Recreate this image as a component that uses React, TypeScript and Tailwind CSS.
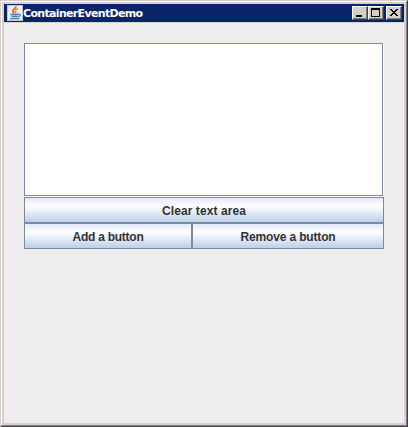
import type { ReactNode } from 'react';

function JavaIcon() {
  return (
    <svg width="16" height="16" viewBox="0 0 16 16" className="shrink-0">
      <rect width="16" height="16" fill="#b5c8de" />
      <rect x="1" y="1" width="14" height="14" fill="#edf1f5" />
      <g fill="none" strokeWidth="1.3">
        <path d="M8.8 1.2C9.5 3.6 5.2 4.2 5.7 6.2c.2.9 1 1.3 1.5 2.1" stroke="#e8701a" strokeWidth="1.9" />
        <path d="M10.8 3.8C8.5 4.6 7.9 5.5 8.8 6.6c.4.7 0 1.2-.6 1.7" stroke="#f08a35" strokeWidth="1.5" />
        <path d="M3.5 9.5h7.5M4.5 11.5h6M3 13.6h9.5" stroke="#4a7aa8" />
        <path d="M11 9.2c3.2-.6 2.7 2-.4 2.5" stroke="#4a7aa8" />
      </g>
    </svg>
  );
}

function CaptionButton({ label, children }: { label: string; children: ReactNode }) {
  return (
    <button
      aria-label={label}
      className="h-[14px] w-4 border border-t-white border-l-white border-r-[#404040] border-b-[#404040] bg-[#d4d0c8] shadow-[inset_-1px_-1px_0_#808080]"
    >
      <svg width="14" height="12" viewBox="0 0 14 12" shapeRendering="crispEdges" className="block">
        {children}
      </svg>
    </button>
  );
}

function MetalButton({ children, className }: { children: ReactNode; className: string }) {
  return (
    <button
      className={`flex h-[26px] items-center justify-center border border-[#7a8aa3] bg-[linear-gradient(to_bottom,#e0e8f8_0%,#fcfcff_30%,#fcfcff_38%,#bbd0e9_100%)] pt-px text-[12px] leading-[14px] font-bold whitespace-nowrap text-[#333333] ${className}`}
    >
      {children}
    </button>
  );
}

export default function App() {
  return (
    <div className="h-[427px] w-[408px] overflow-hidden border border-t-[#d4d0c8] border-r-[#444046] border-b-[#444046] border-l-[#d4d0c8] font-['Liberation_Sans',sans-serif]">
      <div className="h-full border border-t-white border-r-[#848084] border-b-[#848084] border-l-white">
        <div className="flex h-full flex-col border-2 border-[#d6d2cd]">
          <header className="flex h-[18px] shrink-0 items-center bg-[#08246b] pr-[2px] pl-[3px]">
            <JavaIcon />
            <span className="grow pt-px font-['DejaVu_Sans',sans-serif] text-[11px] leading-[17px] font-bold tracking-[-0.67px] whitespace-nowrap text-white">
              ContainerEventDemo
            </span>
            <div className="flex">
              <CaptionButton label="Minimize">
                <path d="M3 8h6v2H3z" fill="#000" />
              </CaptionButton>
              <CaptionButton label="Maximize">
                <path fillRule="evenodd" d="M2 1h9v9H2zM3 3v6h7V3z" fill="#000" />
              </CaptionButton>
              <div className="w-[2px]" />
              <CaptionButton label="Close">
                <path
                  d="M3 2h2v1h1v1h2V3h1V2h2v1h-1v1H9v1H8v1h1v1h1v1h1v1H9V8H8V7H6v1H5v1H3V8h1V7h1V6h1V5H5V4H4V3H3z"
                  fill="#000"
                />
              </CaptionButton>
            </div>
          </header>
          <div className="h-px shrink-0 bg-[#d6d2cd]" />
          <main className="grow bg-[#eeeeee] px-5 pt-5">
            <div className="h-[154px] w-[360px] border-r border-b border-white">
              <div className="h-full border border-[#7a8aa3] bg-white" />
            </div>
            <MetalButton className="w-[360px] tracking-[0.08px]">Clear text area</MetalButton>
            <div className="flex">
              <MetalButton className="w-[168px] tracking-[-0.25px]">Add a button</MetalButton>
              <MetalButton className="w-[192px] tracking-[-0.15px]">Remove a button</MetalButton>
            </div>
          </main>
        </div>
      </div>
    </div>
  );
}
